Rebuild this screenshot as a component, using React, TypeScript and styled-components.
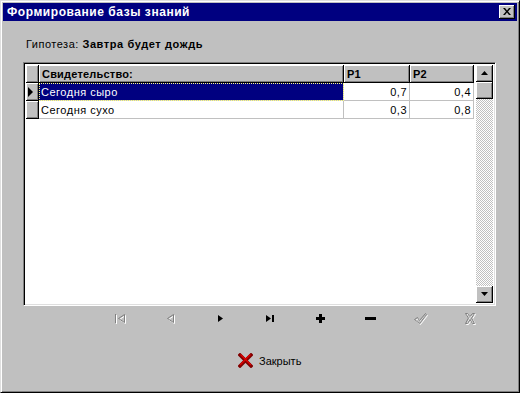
import styled, { createGlobalStyle, css } from 'styled-components'

const Global = createGlobalStyle`
  html, body {
    margin: 0;
    padding: 0;
    background: #c0c0c0;
  }
  body {
    font-family: "Liberation Sans", Arial, sans-serif;
    font-size: 11px;
    color: #000;
  }
`

const raised = css`
  box-shadow: inset 1px 1px #fff, inset -1px -1px #808080;
`

type Row = { name: string; p1: string; p2: string }

const rows: Row[] = [
  { name: 'Сегодня сыро', p1: '0,7', p2: '0,4' },
  { name: 'Сегодня сухо', p1: '0,3', p2: '0,8' },
]

const Disabled = ({ children }: { children: React.ReactNode }) => (
  <>
    <g transform="translate(1 1)" fill="#fff" stroke="#fff">
      {children}
    </g>
    <g fill="#808080" stroke="#808080">
      {children}
    </g>
  </>
)

const NavIcon = ({ kind }: { kind: string }) => {
  switch (kind) {
    case 'first':
      return (
        <svg width="16" height="14" viewBox="0 0 16 14">
          <Disabled>
            <rect x="2" y="2" width="1" height="9" stroke="none" />
            <path d="M11.5 2.5 L5.5 6.5 L11.5 10.5 Z" fill="none" strokeWidth="1" />
          </Disabled>
        </svg>
      )
    case 'prev':
      return (
        <svg width="16" height="14" viewBox="0 0 16 14">
          <Disabled>
            <path d="M10.5 2.5 L4.5 6.5 L10.5 10.5 Z" fill="none" strokeWidth="1" />
          </Disabled>
        </svg>
      )
    case 'next':
      return (
        <svg width="16" height="14" viewBox="0 0 16 14">
          <path d="M5 3 L10 6.5 L5 10 Z" fill="#000" />
        </svg>
      )
    case 'last':
      return (
        <svg width="16" height="14" viewBox="0 0 16 14">
          <path d="M3 3 L8 6.5 L3 10 Z" fill="#000" />
          <rect x="9" y="3" width="2" height="7" fill="#000" />
        </svg>
      )
    case 'add':
      return (
        <svg width="16" height="14" viewBox="0 0 16 14">
          <rect x="6" y="2" width="3" height="9" fill="#000" />
          <rect x="3" y="5" width="9" height="3" fill="#000" />
        </svg>
      )
    case 'remove':
      return (
        <svg width="16" height="14" viewBox="0 0 16 14">
          <rect x="2" y="5" width="11" height="3" fill="#000" />
        </svg>
      )
    case 'post':
      return (
        <svg width="18" height="14" viewBox="0 0 18 14">
          <Disabled>
            <path d="M2.5 7.5 L5.5 5.5 L7.5 8.5 L13.5 1.5 L14.5 2.5 L7.5 11.5 Z" fill="none" />
          </Disabled>
        </svg>
      )
    default:
      return (
        <svg width="16" height="14" viewBox="0 0 16 14">
          <Disabled>
            <path
              d="M2.5 1.5 L4.5 1.5 L7 4.5 L9.5 1.5 L11.5 1.5 L8.5 6 L11.5 11.5 L9.5 11.5 L7 7.5 L4.5 11.5 L2.5 11.5 L5.5 6 Z"
              fill="none"
            />
          </Disabled>
        </svg>
      )
  }
}

const navKinds = ['first', 'prev', 'next', 'last', 'add', 'remove', 'post', 'cancel']

export default function App() {
  return (
    <>
      <Global />
      <S.Window>
        <S.TitleBar>
          <S.Title>Формирование базы знаний</S.Title>
          <S.CloseBox>
            <svg width="8" height="7" viewBox="0 0 8 7">
              <path d="M0 0h2l2 2.5L6 0h2L5 3.5 8 7H6L4 4.5 2 7H0l3-3.5z" fill="#000" />
            </svg>
          </S.CloseBox>
        </S.TitleBar>

        <S.Body>
          <S.Hypothesis>
            Гипотеза: <b>Завтра будет дождь</b>
          </S.Hypothesis>

          <S.GridFrame>
            <S.Table>
              <S.HeadCell />
              <S.HeadCell>Свидетельство:</S.HeadCell>
              <S.HeadCell>P1</S.HeadCell>
              <S.HeadCell>P2</S.HeadCell>
              {rows.map((r, i) => (
                <S.RowGroup key={r.name}>
                  <S.Indicator>
                    {i === 0 && (
                      <svg width="6" height="10" viewBox="0 0 6 10">
                        <path d="M0 0 L5 5 L0 10 Z" fill="#000" />
                      </svg>
                    )}
                  </S.Indicator>
                  <S.Cell $selected={i === 0}>
                    <span>{r.name}</span>
                  </S.Cell>
                  <S.Cell $num>{r.p1}</S.Cell>
                  <S.Cell $num>{r.p2}</S.Cell>
                </S.RowGroup>
              ))}
            </S.Table>

            <S.ScrollBar>
              <S.ArrowBtn>
                <svg width="7" height="4" viewBox="0 0 7 4">
                  <path d="M3.5 0 L7 4 L0 4 Z" fill="#000" />
                </svg>
              </S.ArrowBtn>
              <S.Thumb />
              <S.Track />
              <S.ArrowBtn>
                <svg width="7" height="4" viewBox="0 0 7 4">
                  <path d="M0 0 L7 0 L3.5 4 Z" fill="#000" />
                </svg>
              </S.ArrowBtn>
            </S.ScrollBar>
          </S.GridFrame>

          <S.Navigator>
            {navKinds.map(k => (
              <S.NavButton key={k}>
                <NavIcon kind={k} />
              </S.NavButton>
            ))}
          </S.Navigator>

          <S.CloseRow>
            <S.CloseButton>
              <svg width="15" height="15" viewBox="0 0 15 15">
                <path d="M2 2 L13 13 M13 2 L2 13" stroke="#800000" strokeWidth="3.4" strokeLinecap="square" />
                <path d="M2.5 1.5 L13 12 M12.5 1.5 L2 12" stroke="#e00000" strokeWidth="1.4" />
              </svg>
              Закрыть
            </S.CloseButton>
          </S.CloseRow>
        </S.Body>
      </S.Window>
    </>
  )
}

const S = {
  Window: styled.div`
    box-sizing: border-box;
    width: 520px;
    height: 393px;
    padding: 1px;
    background: #c0c0c0;
    border-top: 1px solid #dfdfdf;
    border-left: 1px solid #dfdfdf;
    border-right: 1px solid #000;
    border-bottom: 1px solid #000;
    box-shadow: inset 1px 1px #fff, inset -1px -1px #808080;
    display: flex;
    flex-direction: column;
    overflow: hidden;
  `,

  TitleBar: styled.div`
    height: 18px;
    margin: 1px 1px 0;
    background: #000080;
    display: flex;
    align-items: center;
    justify-content: space-between;
    padding: 0 2px 0 4px;
  `,

  Title: styled.span`
    color: #fff;
    font-weight: bold;
    font-size: 12px;
    letter-spacing: 0.55px;
  `,

  CloseBox: styled.div`
    box-sizing: border-box;
    width: 16px;
    height: 14px;
    background: #c0c0c0;
    border-right: 1px solid #000;
    border-bottom: 1px solid #000;
    box-shadow: inset 1px 1px #fff, inset -1px -1px #808080;
    display: flex;
    align-items: center;
    justify-content: center;
    padding-left: 1px;
  `,

  Body: styled.div`
    display: flex;
    flex-direction: column;
    padding: 0 0 0 21px;
  `,

  Hypothesis: styled.div`
    margin: 16px 0 0 3px;
    height: 14px;
    line-height: 14px;
    letter-spacing: 0.5px;

    b {
      font-size: 11px;
      letter-spacing: 0.6px;
    }
  `,

  GridFrame: styled.div`
    box-sizing: border-box;
    margin-top: 11px;
    width: 473px;
    height: 244px;
    background: #fff;
    border-top: 1px solid #808080;
    border-left: 1px solid #808080;
    border-right: 1px solid #fff;
    border-bottom: 1px solid #fff;
    box-shadow: inset 1px 1px #000, inset -1px -1px #dfdfdf;
    padding: 2px 2px 2px 2px;
    display: flex;
    justify-content: space-between;
  `,

  Table: styled.div`
    display: grid;
    grid-template-columns: 13px 305px 66px 64px;
    grid-auto-rows: 18px;
    align-content: start;
  `,

  RowGroup: styled.div`
    display: contents;
  `,

  HeadCell: styled.div`
    box-sizing: border-box;
    background: #c0c0c0;
    ${raised}
    border-right: 1px solid #000;
    border-bottom: 1px solid #000;
    font-weight: bold;
    padding: 2px 0 0 3px;
    line-height: 14px;
    letter-spacing: 0.2px;
  `,

  Indicator: styled.div`
    box-sizing: border-box;
    background: #c0c0c0;
    ${raised}
    border-right: 1px solid #000;
    border-bottom: 1px solid #000;
    display: flex;
    align-items: center;
    padding-left: 2px;
  `,

  Cell: styled.div<{ $selected?: boolean; $num?: boolean }>`
    box-sizing: border-box;
    border-right: 1px solid #c0c0c0;
    border-bottom: 1px solid #c0c0c0;
    line-height: 18px;
    padding: 0 2px 0 2px;
    letter-spacing: 0.5px;
    text-align: ${p => (p.$num ? 'right' : 'left')};
    white-space: nowrap;
    ${p =>
      p.$selected &&
      css`
        background: #000080;
        color: #fff;
        outline: 1px dotted #ffff80;
        outline-offset: -1px;
      `}
  `,

  ScrollBar: styled.div`
    width: 17px;
    display: flex;
    flex-direction: column;
  `,

  ArrowBtn: styled.div`
    box-sizing: border-box;
    height: 17px;
    background: #c0c0c0;
    border-right: 1px solid #000;
    border-bottom: 1px solid #000;
    box-shadow: inset 1px 1px #fff, inset -1px -1px #808080;
    display: flex;
    align-items: center;
    justify-content: center;
  `,

  Thumb: styled.div`
    box-sizing: border-box;
    height: 17px;
    background: #c0c0c0;
    border-right: 1px solid #000;
    border-bottom: 1px solid #000;
    box-shadow: inset 1px 1px #fff, inset -1px -1px #808080;
  `,

  Track: styled.div`
    flex: 1;
    background: repeating-conic-gradient(#c0c0c0 0 25%, #fff 0 50%) 0 0 / 2px 2px;
  `,

  Navigator: styled.div`
    display: flex;
    justify-content: flex-end;
    width: 473px;
    height: 26px;
  `,

  NavButton: styled.div`
    width: 50px;
    display: flex;
    align-items: center;
    justify-content: center;
  `,

  CloseRow: styled.div`
    display: flex;
    padding-left: 215px;
    margin-top: 21px;
  `,

  CloseButton: styled.div`
    display: flex;
    align-items: center;
    gap: 6px;
    font-size: 11px;
  `,
}
